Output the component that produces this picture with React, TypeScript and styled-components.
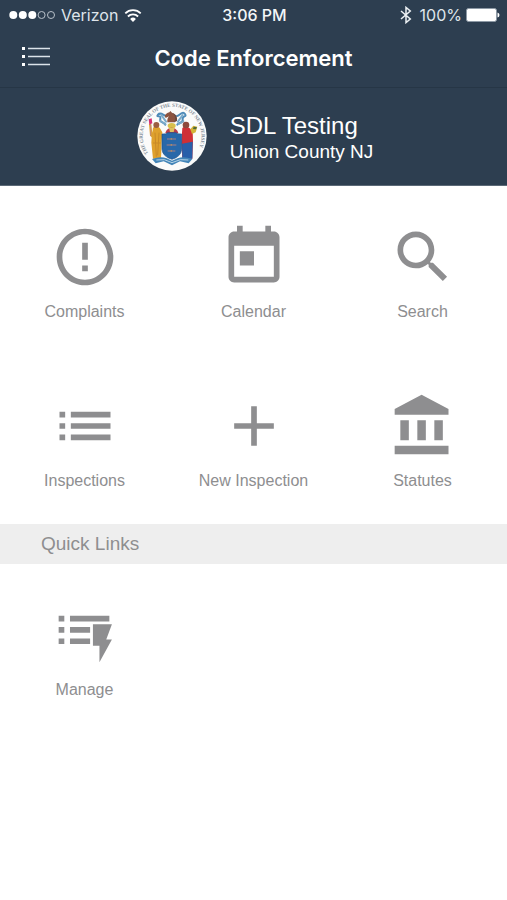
import React from "react";
import styled, { createGlobalStyle } from "styled-components";

const navy = "#2d3e50";
const gray = "#8e8e90";

const GlobalStyle = createGlobalStyle`
  * { box-sizing: border-box; }
  body { margin: 0; background: #fff; font-family: "Liberation Sans", Arial, sans-serif; }
  button { border: 0; background: none; padding: 0; font: inherit; color: inherit; cursor: pointer; }
  svg { display: block; flex: none; }
`;

const Page = styled.div`
  min-height: 100vh;
  background: #fff;
`;

const Header = styled.header`
  background: ${navy};
  color: #fff;
  border-bottom: 1px solid #5b6977;
`;

const StatusBar = styled.div`
  display: grid;
  grid-template-columns: 1fr auto 1fr;
  align-items: center;
  height: 30px;
  padding: 0 7px 0 9px;
  font: 400 16px/20px Inter, sans-serif;
  color: #dfe5eb;
`;

const StatusGroup = styled.div<{ $end?: boolean; $gap: number }>`
  display: flex;
  align-items: center;
  justify-content: ${(p) => (p.$end ? "flex-end" : "flex-start")};
  gap: ${(p) => p.$gap}px;
`;

const Clock = styled.time`
  font-weight: 500;
  color: #f3f6f8;
`;

const NavBar = styled.nav`
  display: grid;
  grid-template-columns: 56px 1fr 56px;
  align-items: center;
  height: 58px;
  border-bottom: 1px solid #263646;
`;

const MenuButton = styled.button`
  display: flex;
  justify-content: flex-end;
  padding: 12px 6px 16px 0;
`;

const Title = styled.h1`
  margin: 0;
  padding-bottom: 2px;
  text-align: center;
  font: 600 22px/28px Inter, sans-serif;
`;

const Profile = styled.section`
  display: flex;
  align-items: center;
  justify-content: center;
  gap: 23px;
  height: 97px;
  padding: 0 0 2px 3px;
`;

const Name = styled.div`
  font-size: 24px;
  line-height: 28px;
  padding-top: 4px;
`;

const Place = styled.div`
  font-size: 19px;
  line-height: 24px;
`;

const Grid = styled.section`
  display: grid;
  grid-template-columns: repeat(3, 1fr);
  grid-auto-rows: 169px;
`;

const Tile = styled.button`
  display: flex;
  flex-direction: column;
  align-items: center;
  justify-content: flex-start;
  gap: 11px;
  padding-top: 37px;
  color: ${gray};
  font-size: 16px;
  line-height: 20px;
`;

const SectionTitle = styled.h2`
  margin: 0;
  padding: 0 41px;
  background: #eee;
  color: ${gray};
  font-size: 19px;
  font-weight: 400;
  line-height: 40px;
`;

const icons = {
  complaints:
    "M11 15h2v2h-2zm0-8h2v6h-2zm.99-5C6.47 2 2 6.48 2 12s4.47 10 9.99 10C17.52 22 22 17.52 22 12S17.52 2 11.99 2zM12 20c-4.42 0-8-3.58-8-8s3.58-8 8-8 8 3.58 8 8-3.58 8-8 8z",
  calendar:
    "M19 3h-1V1h-2v2H8V1H6v2H5c-1.11 0-1.99.9-1.99 2L3 19c0 1.1.89 2 2 2h14c1.1 0 2-.9 2-2V5c0-1.1-.9-2-2-2zm0 16H5V8h14v11zM7 10h5v5H7z",
  search:
    "M15.5 14h-.79l-.28-.27C15.41 12.59 16 11.11 16 9.5 16 5.91 13.09 3 9.5 3S3 5.91 3 9.5 5.91 16 9.5 16c1.61 0 3.09-.59 4.23-1.57l.27.28v.79l5 4.99L20.49 19l-4.99-5zm-6 0C7.01 14 5 11.99 5 9.5S7.01 5 9.5 5 14 7.01 14 9.5 11.99 14 9.5 14z",
  inspections:
    "M3 13h2v-2H3v2zm0 4h2v-2H3v2zm0-8h2V7H3v2zm4 4h14v-2H7v2zm0 4h14v-2H7v2zM7 7v2h14V7H7z",
  add: "M19 13h-6v6h-2v-6H5v-2h6V5h2v6h6v2z",
  statutes:
    "M4 10v7h3v-7H4zm6 0v7h3v-7h-3zM2 22h19v-3H2v3zm14-12v7h3v-7h-3zm-4.5-9L2 6v2h19V6l-9.5-5z",
  manage:
    "M2.7 5.2h2v2h-2zm0 4h2v2h-2zm0 4h2v2h-2zM6.7 5.2h13.9v2H6.7zm0 4h7.1v2H6.7zm0 4h7.1v2H6.7zM14.8 8.2h6.7l-2 5.4h2l-4.4 8v-5.8h-2.3z",
};

function Action({ icon, label }: { icon: keyof typeof icons; label: string }) {
  return (
    <Tile type="button">
      <svg width="68" height="68" viewBox="0 0 24 24" fill="currentColor" aria-hidden="true">
        <path d={icons[icon]} />
      </svg>
      {label}
    </Tile>
  );
}

function Signal() {
  return (
    <svg width="46" height="10" viewBox="0 0 46 10" aria-label="Signal: 3 of 5">
      <g fill="#fff">
        <circle cx="4.3" cy="5" r="4" />
        <circle cx="13.8" cy="5" r="4" />
        <circle cx="23.3" cy="5" r="4" />
      </g>
      <g fill="none" stroke="#b8c1ca" strokeWidth="1">
        <circle cx="32.6" cy="5" r="3.5" />
        <circle cx="42" cy="5" r="3.5" />
      </g>
    </svg>
  );
}

function Wifi() {
  return (
    <svg width="18" height="13" viewBox="0 0 17 13" fill="none" stroke="#fff" strokeWidth="1.8" aria-label="Wi-Fi">
      <path d="M.8 4.4a10.9 10.9 0 0 1 15.4 0M3.4 7.5a7.2 7.2 0 0 1 10.2 0" />
      <path d="M8.5 13 5.6 10a4.1 4.1 0 0 1 5.8 0z" fill="#fff" stroke="none" />
    </svg>
  );
}

function Bluetooth() {
  return (
    <svg width="12" height="18" viewBox="0 0 12 18" fill="none" stroke="#edf1f4" strokeWidth="1.5" aria-label="Bluetooth">
      <path d="M1 5l9.3 8L6 16.6V1.4L10.3 5 1 13" />
    </svg>
  );
}

function Battery() {
  return (
    <svg width="34" height="14" viewBox="0 0 34 14" aria-label="Battery full">
      <rect x=".5" y=".5" width="30" height="13" rx="2" fill="#fff" stroke="#8d99a5" />
      <path d="M31.5 4.5q2 .5 2 2.5t-2 2.5z" fill="#fff" />
    </svg>
  );
}

function MenuIcon() {
  return (
    <svg width="28" height="20" viewBox="0 0 28 20" aria-hidden="true">
      <g fill="#fff">
        <rect x="0" y="0" width="3" height="3" />
        <rect x="0" y="8" width="3" height="3" />
        <rect x="0" y="16" width="3" height="3" />
      </g>
      <path d="M6 1.5h22M6 9.5h22M6 17.5h22" stroke="#dce3e9" strokeWidth="1.6" />
    </svg>
  );
}

function Seal() {
  return (
    <svg width="70" height="70" viewBox="21 25 210 210" role="img" aria-label="State seal">
      <defs>
        <path id="seal-ring" d="M55 182A88 88 0 1 1 189 192" />
      </defs>
      <circle cx="126" cy="130" r="104" fill="#fbfbfa" />
      <text fontFamily="Liberation Serif, serif" fontSize="15" fontWeight="700" fill="#7f8b97">
        <textPath href="#seal-ring">THE GREAT SEAL OF THE STATE OF NEW JERSEY</textPath>
      </text>
      <g fill="none" stroke="#4d8ab8" strokeWidth="6" strokeLinecap="round">
        <path d="M106 96C98 84 88 92 91 78S76 76 84 66s18 4 26 4" />
        <path d="M142 96c6-8 18-4 16-16s14-6 7-16-16 4-24 6" />
        <path d="M94 67l14 20M158 67l-14 20M90 84l16 10M160 86l-14 8" stroke="#79a9c9" />
      </g>
      <path d="M112 89c-1-9 2-14 5-18l-10 5-3-7c4-4 7-9 14-10l3-4 5 5c12 4 14 17 9 29z" fill="#8c5440" />
      <path d="M126 61c10 6 10 15 8 27l7-3c2-13-3-22-15-24z" fill="#6b4a40" />
      <ellipse cx="125" cy="99" rx="12" ry="8" fill="#d8bf4b" />
      <path d="M106 120c4-10 10-15 19-15s16 5 20 15l-8 5h-23z" fill="#b83c4a" />
      <path d="M117 106h17l-3 12h-11z" fill="#e0c060" />
      <path d="M69 105q9-9 20 0l8 14-2 31-2 48H69l-5-48 1-16-5-5-3-35 6-1 4 27z" fill="#dfa12d" />
      <path d="M75 120l4 72M87 120l-4 68M69 151h23" stroke="#c98a28" strokeWidth="3" />
      <circle cx="79" cy="97" r="9" fill="#9b5d42" />
      <path d="M56 80l9-3 2 15-9 4z" fill="#d62f73" />
      <path d="M62 95v34" stroke="#c58d6a" strokeWidth="4" />
      <path d="M157 106q11-9 22 1l9 8 1 31-2 52h-30l-3-48z" fill="#cf3036" />
      <path d="M156 153l32-6-1 51h-30z" fill="#285fa9" />
      <circle cx="168" cy="97" r="10" fill="#8d493d" />
      <path d="M181 110l9-11 12 3-5 17-11 5z" fill="#d3b438" />
      <path d="M191 102l10 2-3 6-9-1z" fill="#526a36" />
      <path d="M96 124q14 1 17-4h25q3 5 17 4v46q-2 22-29 30-28-8-30-30z" fill="#2868a9" stroke="#1d528b" strokeWidth="2" />
      <g stroke="#80788f" strokeWidth="5">
        <path d="M111 139h27M110 157h29M113 175h23" />
        <path d="M124 136v5M124 154v5M124 172v5" stroke="#a98a68" strokeWidth="4" />
      </g>
      <path d="M66 199q27-10 44-2l16 7 17-7q17-8 44 2l-11 13-26-6-24 12-25-12-24 6z" fill="#4385b8" />
      <path d="M79 202l24-1 23 9 25-9 24 1" fill="none" stroke="#b4d2e5" strokeWidth="3" />
    </svg>
  );
}

export default function App() {
  return (
    <Page>
      <GlobalStyle />
      <Header>
        <StatusBar>
          <StatusGroup $gap={6}>
            <Signal />
            <span>Verizon</span>
            <Wifi />
          </StatusGroup>
          <Clock>3:06 PM</Clock>
          <StatusGroup $gap={4} $end>
            <StatusGroup $gap={8}>
              <Bluetooth />
              <span>100%</span>
            </StatusGroup>
            <Battery />
          </StatusGroup>
        </StatusBar>
        <NavBar>
          <MenuButton type="button" aria-label="Menu">
            <MenuIcon />
          </MenuButton>
          <Title>Code Enforcement</Title>
        </NavBar>
        <Profile>
          <Seal />
          <div>
            <Name>SDL Testing</Name>
            <Place>Union County NJ</Place>
          </div>
        </Profile>
      </Header>
      <main>
        <Grid>
          <Action icon="complaints" label="Complaints" />
          <Action icon="calendar" label="Calendar" />
          <Action icon="search" label="Search" />
          <Action icon="inspections" label="Inspections" />
          <Action icon="add" label="New Inspection" />
          <Action icon="statutes" label="Statutes" />
        </Grid>
        <SectionTitle>Quick Links</SectionTitle>
        <Grid>
          <Action icon="manage" label="Manage" />
        </Grid>
      </main>
    </Page>
  );
}
